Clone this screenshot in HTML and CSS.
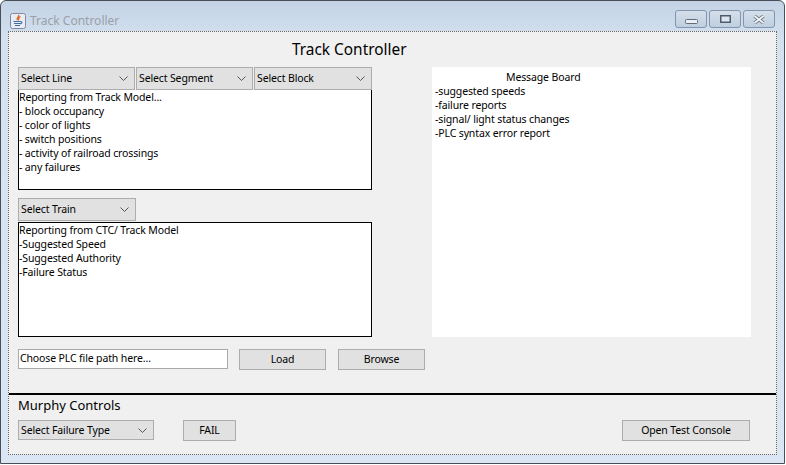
FILE: index.html
```html
<!DOCTYPE html>
<html lang="en">
<head>
  <meta charset="UTF-8" />
  <title>Track Controller</title>
  <link rel="stylesheet" href="styles.css">
</head>
<body>
  <div class="window">
    <div class="titlebar">
      <div class="title-left">
        <svg class="app-icon" width="16" height="16" viewBox="0 0 16 16">
          <rect x="0.500" y="0.500" width="15" height="15" rx="2" fill="#e9edf3" stroke="#7d8aa0" />
          <path d="M8.500 2c1.200 1.800-2.500 2.800-1 5.200M10.500 3.500c-1.800 1-2.800 2-1.500 3.700" fill="none" stroke="#e0651f" stroke-width="1.400" />
          <path d="M3.500 8.500h7M4 10.500h6.500M5 12.500h5M10.500 8.500c2 0 2 2-.5 2.500" fill="none" stroke="#3a6ea5" stroke-width="1.100" />
        </svg>
        <span class="title-text">Track Controller</span>
      </div>
      <div class="win-buttons">
        <div class="win-btn win-min">
          <svg width="13" height="5" viewBox="0 0 13 5"><rect x="0.500" y="0.500" width="12" height="4" rx="1" fill="#eceff3" stroke="#5f6b7d" /></svg>
        </div>
        <div class="win-btn">
          <svg width="11" height="8" viewBox="0 0 11 8"><rect x="0.750" y="0.750" width="9.500" height="6.500" fill="#dfe5ee" stroke="#4f5b6e" stroke-width="1.500" /></svg>
        </div>
        <div class="win-btn">
          <svg width="12" height="9" viewBox="0 0 12 9"><path d="M1.500 1l9 7M10.500 1l-9 7" stroke="#5f6b7d" stroke-width="3.400" /><path d="M1.500 1l9 7M10.500 1l-9 7" stroke="#f4f6f8" stroke-width="1.800" /></svg>
        </div>
      </div>
    </div>

    <div class="content">
      <h1 class="main-title">Track Controller</h1>

      <div class="columns">
        <div class="left">
          <div class="combo-row">
            <div class="combo"><span>Select Line</span><svg class="chev" width="9" height="5" viewBox="0 0 9 5"><path d="M0.500 0.500l4 4 4-4" fill="none" stroke="#555" /></svg></div>
            <div class="combo"><span>Select Segment</span><svg class="chev" width="9" height="5" viewBox="0 0 9 5"><path d="M0.500 0.500l4 4 4-4" fill="none" stroke="#555" /></svg></div>
            <div class="combo"><span>Select Block</span><svg class="chev" width="9" height="5" viewBox="0 0 9 5"><path d="M0.500 0.500l4 4 4-4" fill="none" stroke="#555" /></svg></div>
          </div>
          <div class="textbox box-model">Reporting from Track Model...
- block occupancy
- color of lights
- switch positions
- activity of railroad crossings
- any failures</div>

          <div class="combo combo-train"><span>Select Train</span><svg class="chev" width="9" height="5" viewBox="0 0 9 5"><path d="M0.500 0.500l4 4 4-4" fill="none" stroke="#555" /></svg></div>
          <div class="textbox box-ctc">Reporting from CTC/ Track Model
-Suggested Speed
-Suggested Authority
-Failure Status</div>
        </div>

        <div class="board">
          <div class="board-head">Message Board</div>
          <div class="board-text">-suggested speeds
-failure reports
-signal/ light status changes
-PLC syntax error report</div>
        </div>
      </div>

      <div class="plc-row">
        <div class="path-field">Choose PLC file path here...</div>
        <div class="btn btn-load">Load</div>
        <div class="btn btn-browse">Browse</div>
      </div>

      <div class="divider"></div>

      <div class="murphy">
        <div class="murphy-title">Murphy Controls</div>
        <div class="murphy-row">
          <div class="combo combo-fail"><span>Select Failure Type</span><svg class="chev" width="9" height="5" viewBox="0 0 9 5"><path d="M0.500 0.500l4 4 4-4" fill="none" stroke="#555" /></svg></div>
          <div class="btn btn-fail">FAIL</div>
          <div class="btn btn-console">Open Test Console</div>
        </div>
      </div>
    </div>
  </div>
</body>
</html>
```

FILE: styles.css
```css
html, body {
  margin: 0;
  padding: 0;
}
body {
  width: 786px;
  height: 465px;
  overflow: hidden;
  font-family: "Noto Sans", "Open Sans", sans-serif;
  font-size: 10.5px;
  letter-spacing: -0.13px;
  color: #000;
  background: #fff;
}
.window {
  box-sizing: border-box;
  width: 785px;
  height: 464px;
  border: 1px solid #4a4f57;
  border-radius: 6px 6px 0 0;
  background: linear-gradient(180deg, #c3d3e5 0, #d4e1ef 40px, #dae6f3 100%);
  padding: 0 7px 8px 7px;
  display: flex;
  flex-direction: column;
}
.titlebar {
  height: 30px;
  flex: none;
  display: flex;
  justify-content: space-between;
  align-items: flex-start;
}
.title-left {
  display: flex;
  align-items: center;
  gap: 4px;
  margin: 11px 0 0 2px;
}
.title-text {
  font-size: 12px;
  letter-spacing: 0;
  color: #9aa0a8;
}
.win-buttons {
  display: flex;
  gap: 2px;
  margin: 9px 2px 0 0;
}
.win-btn {
  box-sizing: border-box;
  width: 32px;
  height: 18px;
  border: 1px solid #8494aa;
  border-radius: 3px;
  background: linear-gradient(180deg, #d5dfeb, #bfcede);
  display: flex;
  align-items: center;
  justify-content: center;
}
.win-min {
  align-items: flex-end;
  padding-bottom: 3px;
}
.content {
  box-sizing: border-box;
  flex: 1;
  background: #f0f0f0;
  border: 1px dotted #666;
  padding: 0 0 0 9px;
}
.main-title {
  margin: 7px 0 0 0;
  padding-left: 274px;
  height: 28px;
  line-height: 22px;
  font-size: 15.400px;
  letter-spacing: 0;
  font-weight: 400;
}
.columns {
  display: flex;
  gap: 60px;
}
.left {
  width: 354px;
  display: flex;
  flex-direction: column;
}
.combo-row {
  display: grid;
  grid-template-columns: 117px 117px 118px;
  gap: 1px;
}
.combo {
  box-sizing: border-box;
  height: 23px;
  border: 1px solid #adadad;
  background: #e1e1e1;
  padding: 0 6px 2px 2px;
  display: flex;
  align-items: center;
  justify-content: space-between;
}
.chev {
  margin-top: 2px;
}
.textbox {
  box-sizing: border-box;
  background: #fff;
  border: 1px solid #000;
  line-height: 14px;
  white-space: pre-wrap;
}
.box-model {
  height: 100px;
  border-top: 0;
}
.combo-train {
  width: 118px;
  margin-top: 8px;
  margin-bottom: 1px;
}
.box-ctc {
  height: 115px;
}
.board {
  box-sizing: border-box;
  width: 319px;
  height: 270px;
  background: #fff;
  padding: 3px 3px;
  line-height: 14px;
}
.board-head {
  padding-left: 71px;
}
.board-text {
  white-space: pre-wrap;
}
.plc-row {
  display: flex;
  align-items: flex-start;
  margin-top: 12px;
}
.path-field {
  box-sizing: border-box;
  width: 210px;
  height: 20px;
  line-height: 17px;
  background: #fff;
  border: 1px solid #a9a9a9;
  padding-left: 1px;
}
.btn {
  box-sizing: border-box;
  height: 21px;
  border: 1px solid #adadad;
  background: #e1e1e1;
  padding-bottom: 1px;
  display: flex;
  align-items: center;
  justify-content: center;
}
.btn-load {
  width: 87px;
  margin-left: 11px;
}
.btn-browse {
  width: 87px;
  margin-left: 12px;
}
.divider {
  height: 2px;
  background: #000;
  margin: 23px 0 0 -9px;
}
.murphy-title {
  font-size: 13px;
  letter-spacing: 0;
  line-height: 18px;
  margin-top: 1px;
}
.murphy-row {
  display: flex;
  align-items: flex-start;
  margin-top: 6px;
}
.combo-fail {
  flex: none;
  width: 136px;
  height: 20px;
  padding-bottom: 1px;
}
.btn-fail {
  width: 53px;
  margin-left: 29px;
}
.btn-console {
  width: 128px;
  margin-left: 386px;
}
```
